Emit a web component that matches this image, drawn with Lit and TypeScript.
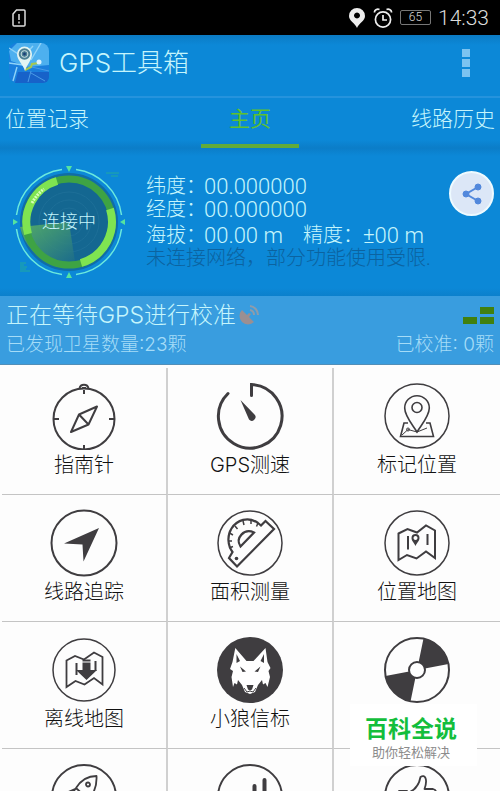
import { LitElement, html, svg, css } from "lit";
import { customElement, state } from "lit/decorators.js";

const INK = "#3f3d40";

const icons: Record<string, unknown> = {
  compass: svg`<circle r="30.5" cy="3" stroke-width="2"/>
    <path stroke-width="2" d="M-4.5 -27.5a4.6 4.6 0 0 1 9 0M-2 -28h4M0 -26v4M0 33v-4M-30 3h5M30 3h-5"/>
    <path stroke-width="2" stroke-linejoin="round" d="M13 -9.500L4.500 8.500L-13 16L-5 -1.500ZM-5 -1.500L4.500 8.500"/>`,
  speed: svg`<path stroke-width="3" stroke-linecap="round" d="M-22 -22.500A31.800 31.800 0 1 0 1.500 -31.500V-20.500"/>
    <path fill=${INK} stroke="none" d="M-9.500 -16L4.500 -1.500A3.600 3.600 0 0 1 -1 3.500Z"/>`,
  mark: svg`<circle r="32" stroke-width="1.500"/>
    <path stroke-width="1.600" d="M0 16C-5 8 -12.300 0 -12.300 -8A12.300 12.300 0 0 1 12.300 -8C12.300 0 5 8 0 16Z"/>
    <circle cy="-8.500" r="5" stroke-width="1.600"/>
    <path stroke-width="1.600" d="M-9 7H-13L-16.500 20.500H16.500L13 7H9"/>
    <path stroke-width="1" d="M-15 19L-9 13.500L0 16L10 12"/><circle cx="-9" cy="13.500" r="1.500" stroke-width="1"/>`,
  track: svg`<circle r="32.500" stroke-width="2"/>
    <path fill=${INK} stroke="none" d="M15 -15L-20 0.500L-1.500 1.500L-0.500 18.500Z"/>`,
  area: svg`<circle r="32" stroke-width="1.500"/>
    <path stroke-width="2.200" d="M-13 23.500L24 -14L15.500 -22L11 -17.500L8 -20C-2 -27 -13 -23 -18.500 -14.500C-23 -7.500 -22.500 2 -17.500 9L-21 15Z"/>
    <path stroke-width="2.200" d="M-9.500 3.500C-15 -5 -6 -15 4 -10.500Z"/>
    <path stroke-width="1.500" d="M-22 -2h4M-20.500 -10l3.500 2M-15 -17l2.500 3M-7 -22l1 4M1 -23v4M8 -20l-1.500 3.500M-21 5l4 -1.500"/>
    <circle cx="-13.500" cy="15.500" r="1.800" fill=${INK} stroke="none"/>`,
  map: svg`<circle r="32" stroke-width="1.500"/>
    <path stroke-width="2" d="M-18.500 -9.500L-9.500 -14L0 -10.500L9 -17.500L18 -12.500V15L9 8.500L-0.500 15.500L-10 12L-18.500 17Z"/>
    <path stroke-width="2" d="M-9 -7V6.500M10.500 -9V2"/>
    <path fill=${INK} stroke="none" fill-rule="evenodd" d="M-1.500 3C-3 -0.500 -5.500 -2 -5.500 -5A4 4 0 0 1 2.500 -5C2.500 -2 0 -0.500 -1.500 3ZM-1.500 -7a2 2 0 1 0 0.010 0Z"/>`,
  offline: svg`<circle r="31" stroke-width="1.500"/>
    <path stroke-width="1.800" d="M-17.500 -9.500L-9 -14L0 -10.500L10 -17.500L18.500 -13V14.500L10 8L0.500 14.500L-8.500 11L-17.500 17Z"/>
    <path stroke-width="2" d="M-7.500 -7V5M11.500 -9V1"/>
    <path fill=${INK} stroke="none" d="M-1.500 -10.500H6.500V-8.500H-1.500ZM-1.500 -7.500H6.500V0H13L2.500 10L-8 0H-1.500Z"/>`,
  wolf: svg`<circle r="33" fill=${INK} stroke="none"/>
    <path fill="#fff" stroke="none" d="M-14.700 -22L-3.500 -9L3.500 -9L15.500 -22L17.500 -8L20.500 -2L18.500 1L20 7L17.500 17L15.500 13L13 14.500L12 10L8 15L5 22L0 24L-5 22L-8 15L-12 10L-13 14.500L-15.500 13L-17 17L-18.500 7L-17 1L-20 -1L-17.500 -8Z"/>
    <path fill=${INK} stroke="none" d="M-13.500 -16L-10 -9L-13.500 -7ZM14 -16L14 -7L10.500 -9ZM-10 -3.500L-4 1.500L-7.500 2ZM10.500 -3.500L4.500 1.500L8 2ZM-3.500 15L3.500 15L2 19.500L0 20.500L-2 19.500Z"/>
    <path stroke-width="1" d="M-6 18L-3 22L0 21L3 22L6 18"/>`,
  disc: svg`<circle r="32" stroke-width="2"/>
    <path fill=${INK} stroke="none" d="M0 0L6.500 -31.500A32 32 0 0 1 31.500 -6ZM0 0L-6.500 31.500A32 32 0 0 1 -31.500 6Z"/>
    <circle r="8" fill="#fff" stroke-width="2"/>`,
  rocket: svg`<circle r="32" stroke-width="2"/>
    <path stroke-width="1.800" stroke-linejoin="round" d="M12.500 -21C4 -21 -3 -17 -8 -9L-15 1L-3 11L5 2C11 -5 13 -12 12.500 -21ZM-9 -8L-18 -4L-21 1L-14 0M-8 -9L4 2"/>
    <circle cx="4" cy="-12.500" r="2" stroke-width="1.800"/>`,
  signal: svg`<circle r="32" stroke-width="2"/>
    <path stroke-width="4" stroke-linecap="round" d="M-16 3V14M-6 -4V14M4.500 -11V14M14.500 -17V14"/>`,
  like: svg`<circle r="32" stroke-width="2"/>
    <path stroke-width="1.800" stroke-linejoin="round" d="M-18 -6H-10V15H-18ZM-10 -4C-3 -6 2 -12 3.500 -20C8 -23 11 -18 7.500 -8H16C20 -7 20 -3 17 -2C19 1 18 4 16 5C16 10 14 14 10 14H-4L-10 11"/>`,
};

const tools = [
  ["compass", "指南针"],
  ["speed", "GPS测速"],
  ["mark", "标记位置"],
  ["track", "线路追踪"],
  ["area", "面积测量"],
  ["map", "位置地图"],
  ["offline", "离线地图"],
  ["wolf", "小狼信标"],
  ["disc", ""],
  ["rocket", ""],
  ["signal", ""],
  ["like", ""],
];

@customElement("gps-tool")
class GpsTool extends LitElement {
  static properties = { icon: {}, label: {} };
  declare icon: string;
  declare label: string;

  static styles = css`
    :host { display: block; }
    .tool {
      display: flex; flex-direction: column; align-items: center; gap: 3px;
      width: 100%; height: 100%; padding: 14px 0 0; border: 0; background: none;
      color: #111; font: 300 20px/24px Inter, "Noto Sans CJK SC", sans-serif;
    }
    .icon { width: 68px; height: 68px; flex: none; }
  `;

  render() {
    return html`<button class="tool" aria-label=${this.label || this.icon}>
      <svg class="icon" viewBox="-34 -34 68 68" fill="none" stroke=${INK}>${icons[this.icon]}</svg>
      <span>${this.label}</span>
    </button>`;
  }
}

@customElement("app-root")
class AppRoot extends LitElement {
  @state() private tab = 1;

  static styles = css`
    :host {
      display: flex; flex-direction: column; position: relative;
      height: 100vh; overflow: hidden; background: #fdfdfd;
      font-family: Roboto, "Noto Sans CJK SC", sans-serif; font-weight: 300;
      color: #c5f5fc;
    }
    * { box-sizing: border-box; }
    button { font: inherit; color: inherit; border: 0; background: none; padding: 0; }
    svg { display: block; flex: none; }
    .status {
      display: flex; align-items: center; gap: 7px; height: 35px; flex: none;
      padding: 0 11px 0 12px; background: #000; color: #dcdcdc;
    }
    .spacer { flex: 1; }
    .battery {
      width: 31px; height: 15px; border: 1px solid #777; border-radius: 2px;
      font-size: 12px; line-height: 13px; text-align: center;
    }
    .clock { font-size: 21px; line-height: 24px; }
    .header {
      display: flex; align-items: center; gap: 10px; height: 61px; flex: none;
      padding: 0 24px 6px 9px;
      background: linear-gradient(#0b7bc4, #0c88d7 10px);
    }
    .title { margin: 0; font-family: Inter, "Noto Sans CJK SC", sans-serif; font-size: 26px; line-height: 32px; font-weight: 300; }
    .more { display: flex; flex-direction: column; gap: 2px; padding: 0 6px; }
    .dot { width: 8px; height: 8px; background: #7cc3f0; }
    .tabs {
      display: grid; grid-template-columns: 1fr 98px 1fr; height: 52px; flex: none;
      padding: 0 5px; border-top: 2px solid #2593dd;
      background: linear-gradient(#0c88d7 42px, #0b7dc8);
    }
    .tab { font-size: 21px; line-height: 30px; padding: 5px 0 10px; text-align: left; border-bottom: 4px solid transparent; }
    .tab:last-child { text-align: right; }
    .tab.active { color: #5fc12d; font-weight: 400; text-align: center; border-color: #62ab3a; }
    .info {
      display: flex; gap: 17px; padding: 14px 6px 14px 9px; flex: none;
      background: linear-gradient(#0b7dc8, #0c88d7 8px, #0c88d7 140px, #0b80cc);
    }
    .facts { flex: 1; display: flex; flex-direction: column; padding-top: 13px; font-size: 20px; white-space: nowrap; }
    .fact { line-height: 23px; display: flex; }
    .name { width: 58px; flex: none; }
    .value { font-size: 22px; }
    .fact.gap { margin-top: 3px; }
    .accuracy { margin-left: 20px; width: 60px; }
    .note { font-size: 20px; line-height: 22px; color: #0c63a0; }
    .share {
      width: 45px; height: 45px; margin-top: 9px; border-radius: 50%; flex: none;
      background: #dce7f7; border: 2px solid #eefaff; display: grid; place-items: center;
    }
    .calibration {
      display: grid; grid-template-columns: 1fr auto; align-items: center; flex: none;
      height: 69px; padding: 4px 6px 6px; background: #399ddf;
      font-family: Inter, "Noto Sans CJK SC", sans-serif;
      border-bottom: 1px solid #528fb8; row-gap: 1px;
    }
    .waiting { display: flex; align-items: center; gap: 3px; font-size: 23px; line-height: 30px; white-space: nowrap; }
    .sub { font-size: 19px; line-height: 26px; color: #a5dcf7; }
    .bars { justify-self: end; }
    .tools {
      flex: 1; min-height: 0; overflow-y: auto; scrollbar-width: none;
      display: grid; grid-template-columns: repeat(3, 1fr); grid-auto-rows: 127px;
      padding: 3px 0 0 2px;
    }
    .cell { border-right: 2px solid #d0d0d0; border-bottom: 1px solid #c4c4c4; }
    .cell:nth-child(3n) { border-right: 0; }
    .badge {
      position: absolute; right: 23px; bottom: 25px; width: 127px; height: 62px;
      background: #fff; text-align: center; padding: 12px 5px 0 0;
    }
    .brand { font-size: 23px; line-height: 28px; font-weight: 700; color: #13be3c; }
    .slogan { font-size: 13px; line-height: 18px; font-weight: 400; color: #8c8c8c; }
    .state { fill: #c5f5fc; font-size: 18px; }
  `;

  private tabNames = ["位置记录", "主页", "线路历史"];

  private radar() {
    return html`<svg width="120" height="120" viewBox="-60 -60 120 120" fill="none">
      <defs>
        <linearGradient id="sweep" x1="0" y1="0" x2="1" y2="1">
          <stop offset="0" stop-color="#64bd5c"/><stop offset="1" stop-color="#1b6b8c"/>
        </linearGradient>
      </defs>
      <circle r="49" fill="#116da6"/>
      <circle r="40" fill="#146791"/>
      <g stroke="#1d6f98" stroke-width="1"><circle r="14"/><circle r="22"/><circle r="30"/></g>
      <path fill="url(#sweep)" d="M0 0L-49 5A49 49 0 0 0 -14 42L6 40Z" opacity=".8"/>
      <circle r="43" stroke="#3ea344" stroke-width="7"/>
      <path stroke="#7fe451" stroke-width="8" d="M-41 12A43 43 0 0 1 -12 -41M41 -13A43 43 0 0 1 12 41"/>
      <path stroke="#d8ffb8" stroke-width="3" stroke-dasharray="2 1" d="M-37 -19A42 42 0 0 1 -25 -33"/>
      <path stroke="#6be9dd" stroke-width="1.500" d="M-52.500 -7A53 53 0 0 1 -7 -52.500M7 -52.500A53 53 0 0 1 52.500 -7M52.500 7A53 53 0 0 1 7 52.500M-7 52.500A53 53 0 0 1 -52.500 7"/>
      <path fill="#55e3a0" d="M-3 -56H3L0 -50ZM-3 56H3L0 50ZM-56 -3V3L-51 0ZM56 -3V3L51 0Z"/>
      <path stroke="#21a9a0" stroke-width="1" d="M-49 41h6M-49 43h4M-49 45h7M-49 47h6M-49 49h10M37 -49h13M42 -46h7"/>
      <text class="state" y="6" text-anchor="middle">连接中</text>
    </svg>`;
  }

  render() {
    return html`
      <div class="status">
        <svg width="14" height="18" viewBox="0 0 14 18" fill="none" stroke="#ddd" stroke-width="1.500">
          <path d="M4.500 1H12a1 1 0 0 1 1 1V16a1 1 0 0 1 -1 1H2a1 1 0 0 1 -1 -1V5ZM7 5v6M7 12.500v2"/>
        </svg>
        <span class="spacer"></span>
        <svg width="18" height="20" viewBox="0 0 18 20">
          <path fill="#eee" fill-rule="evenodd" d="M9 20C7 15 1 13 1 8A8 8 0 0 1 17 8C17 13 11 15 9 20ZM9 4.500a3 3 0 1 0 0.010 0Z"/>
        </svg>
        <svg width="20" height="20" viewBox="0 0 20 20" fill="none" stroke="#eee" stroke-width="1.700">
          <circle cx="10" cy="11.500" r="7.600"/><path d="M10 7v5h4M1.500 4.500a3.500 3 0 0 1 5 -3M18.500 4.500a3.500 3 0 0 0 -5 -3"/>
        </svg>
        <span class="battery">65</span>
        <span class="clock">14:33</span>
      </div>

      <header class="header">
        <svg width="40" height="40" viewBox="0 0 40 40">
          <rect width="40" height="40" rx="8" fill="#1a7fdd"/>
          <path fill="#4db0ef" d="M8 0H32A8 8 0 0 1 40 8V22L19 24L2 18L0 8Z"/>
          <path fill="#1762c9" d="M6 40L9 29L40 29V34A6 6 0 0 1 34 40Z"/>
          <path stroke="#8fd3f8" fill="none" stroke-width="1.400" d="M0 5L14 14L24 3M22 17L32 0M0 20L14 22M8 24L4 38"/>
          <path stroke="#4a9be6" fill="none" stroke-width="1" d="M14 22L40 28M22 28L19 39M22 30L36 38"/>
          <path stroke="#a7c84c" fill="none" stroke-width="2" d="M16 27L22 24L23 21L30 20"/>
          <circle cx="30" cy="19" r="2.500" fill="#d8f2ff"/>
          <path fill="#e3f4f2" d="M16 28C14 21 8 17 8 11A7.500 7.500 0 0 1 23 11C23 17 18 21 16 28Z"/>
          <circle cx="15.500" cy="11" r="5.800" fill="#4b7f93"/><circle cx="15.500" cy="11" r="3.400" fill="none" stroke="#c9dde2"/>
          <circle cx="15.500" cy="11" r="1.400" fill="#1c3f78"/>
        </svg>
        <h1 class="title">GPS工具箱</h1>
        <span class="spacer"></span>
        <button class="more" aria-label="更多"><i class="dot"></i><i class="dot"></i><i class="dot"></i></button>
      </header>

      <nav class="tabs">
        ${this.tabNames.map((name, i) => html`<button class="tab ${i === this.tab ? "active" : ""}"
          @click=${() => { this.tab = i; }}>${name}</button>`)}
      </nav>

      <section class="info">
        ${this.radar()}
        <div class="facts">
          <div class="fact"><span class="name">纬度：</span><span class="value">00.000000</span></div>
          <div class="fact"><span class="name">经度：</span><span class="value">00.000000</span></div>
          <div class="fact gap">
            <span class="name">海拔：</span><span class="value">00.00 m</span>
            <span class="accuracy">精度：</span><span class="value">±00 m</span>
          </div>
          <div class="note">未连接网络，部分功能使用受限.</div>
        </div>
        <button class="share" aria-label="分享">
          <svg width="20" height="22" viewBox="0 0 20 22" fill="#5288dc" stroke="#5288dc">
            <path fill="none" stroke-width="2" d="M16 4L4 11L16 18"/>
            <circle cx="16" cy="4" r="3"/><circle cx="4" cy="11" r="3"/><circle cx="16" cy="18" r="3"/>
          </svg>
        </button>
      </section>

      <section class="calibration">
        <div class="waiting">正在等待GPS进行校准
          <svg width="20" height="20" viewBox="0 0 20 20" fill="none" stroke="#8d9cab" stroke-width="2">
            <path fill="#9b8f92" stroke="none" d="M3 5A8 8 0 0 0 15 17L10 12L12 9L10 8L8 10Z"/>
            <path d="M11 5a5 5 0 0 1 4 5M11 1a9 9 0 0 1 8 9"/>
          </svg>
        </div>
        <svg class="bars" width="31" height="17" viewBox="0 0 31 17" fill="#41800f">
          <path d="M0 10H14V17H0ZM17 10H31V17H17ZM17 0H31V7H17Z"/>
        </svg>
        <div class="sub">已发现卫星数量:23颗</div>
        <div class="sub">已校准: 0颗</div>
      </section>

      <main class="tools">
        ${tools.map(([icon, label]) => html`<div class="cell"><gps-tool .icon=${icon} .label=${label}></gps-tool></div>`)}
      </main>

      <aside class="badge">
        <div class="brand">百科全说</div>
        <div class="slogan">助你轻松解决</div>
      </aside>
    `;
  }
}
